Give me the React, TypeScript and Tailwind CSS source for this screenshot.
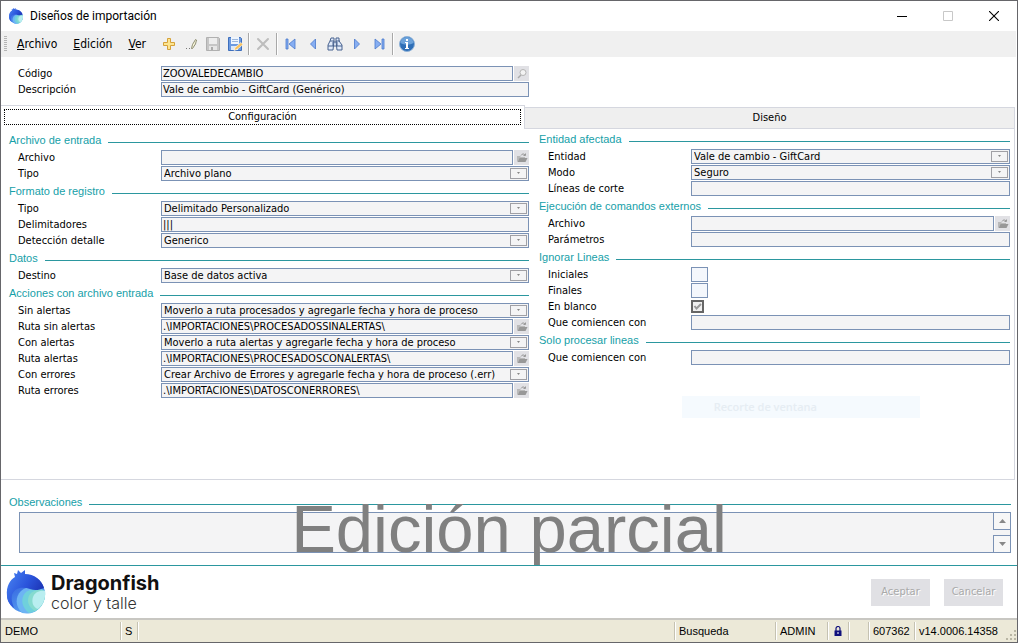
import type { ReactNode } from "react";

const FIELD = "block h-[15px] w-full min-w-0 rounded-none border border-[#7b92b5] bg-[#f4f4f5] p-0 text-[11px] leading-[13px] text-black outline-none";

function Section({ title, children }: { title: string; children?: ReactNode }) {
  return (
    <section>
      <div className="flex h-[19px] items-center gap-[7px]">
        <h2 className="font-['Liberation_Sans',sans-serif] text-[11px] leading-[15px] whitespace-nowrap text-[#16a0a8]">{title}</h2>
        <span className="mt-[3px] h-px flex-1 bg-[#2b979f]"></span>
      </div>
      {children}
    </section>
  );
}

function Row({ id, label, children }: { id: string; label: string; children: ReactNode }) {
  return (
    <div className="flex h-4 items-start">
      <label htmlFor={id} className="w-[152px] shrink-0 pl-[9px] leading-[16px] whitespace-nowrap">{label}</label>
      <div className="flex min-w-0 flex-1 items-start gap-px">{children}</div>
    </div>
  );
}

function TextRow({ id, label, value = "" }: { id: string; label: string; value?: string }) {
  return (
    <Row id={id} label={label}>
      <input id={id} type="text" readOnly defaultValue={value} className={FIELD + " pl-px"} />
    </Row>
  );
}

function FolderIcon() {
  return (
    <svg viewBox="0 0 12 12" className="h-3 w-3">
      <path d="M1 10V4h3l1 1h4v1H4L1 10z" fill="#b9b9b9" />
      <path d="M3.5 6H11.5L9.5 10H1.5z" fill="#989898" />
      <path d="M5 3.5C6 1.5 8 1.5 9 3M9.500 1.500V3.500H7.500" fill="none" stroke="#999" />
    </svg>
  );
}

function FileRow({ id, label, value = "" }: { id: string; label: string; value?: string }) {
  return (
    <Row id={id} label={label}>
      <input id={id} type="text" readOnly defaultValue={value} className={FIELD + " pl-px"} />
      <button type="button" aria-label="Buscar archivo" className="flex h-[15px] w-[15px] shrink-0 items-center justify-center bg-[#e1e1e5]">
        <FolderIcon />
      </button>
    </Row>
  );
}

function SelectRow({ id, label, value }: { id: string; label: string; value: string }) {
  return (
    <Row id={id} label={label}>
      <div className="relative w-full">
        <select id={id} className={FIELD + " appearance-none pl-[2px]"}>
          <option>{value}</option>
        </select>
        <span className="pointer-events-none absolute top-[2px] right-[2px] flex h-[11px] w-[17px] items-center justify-center border border-[#a0a0a5] bg-[#f4f4f5]">
          <svg viewBox="0 0 5 3" className="h-[3px] w-[5px]"><path d="M1 0h3L2.500 2z" fill="#888" /></svg>
        </span>
      </div>
    </Row>
  );
}

function SmallRow({ id, label }: { id: string; label: string }) {
  return (
    <Row id={id} label={label}>
      <input id={id} type="text" className="block h-[15px] w-[17px] border border-[#7b92b5] bg-[#f4f7fc] p-0" />
    </Row>
  );
}

function ToolButton({ label, children }: { label: string; children: ReactNode }) {
  return (
    <button type="button" aria-label={label} className="flex h-[22px] w-[22px] items-center justify-center">
      <svg viewBox="0 0 16 16" className="h-4 w-4">{children}</svg>
    </button>
  );
}

function ToolSeparator() {
  return <span className="mx-[2px] h-[22px] w-[2px] border-l border-[#a8a8a8] bg-white"></span>;
}

function Logo({ id, className }: { id: string; className: string }) {
  return (
    <svg viewBox="0 0 40 44" className={className}>
      <defs>
        <linearGradient id={id + "-dome"} x1="0" y1="0" x2="1" y2="0.6">
          <stop offset="0" stopColor="#4a86f2" />
          <stop offset="0.55" stopColor="#2b55dc" />
          <stop offset="1" stopColor="#1b2fae" />
        </linearGradient>
        <linearGradient id={id + "-tail"} x1="0" y1="0" x2="0.6" y2="1">
          <stop offset="0" stopColor="#2a52d8" />
          <stop offset="1" stopColor="#5aa4f4" />
        </linearGradient>
      </defs>
      <circle cx="20" cy="24" r="19" fill={"url(#" + id + "-tail)"} />
      <path d="M39 21C33 16 22 15 15 21c-6 6-6 15 1 22 14 3 24-8 23-22z" fill="#6db4f3" />
      <path d="M39 21C33 18 24 18 19 23c-5 6-3 15 4 20 11-1 17-11 16-22z" fill="#6fd0dc" />
      <path d="M39 21C33 19 28 20 24 24c-4 6-2 13 5 17 7-4 11-11 10-20z" fill="#86dbcf" />
      <path d="M39 21c-5-1-10 1-12 6-2 6 1 11 5 12 5-4 8-11 7-18z" fill="#b9eef0" />
      <path d="M1 26C0 16 4 10 9 7L8 3l3 1 1-4 3 3 4-3v4c9 0 17 6 19 14-5 2-9 3-14 1C16 16 8 18 6 25c-1 4 0 8 2 13C4 35 1 31 1 26z" fill={"url(#" + id + "-dome)"} />
    </svg>
  );
}

function StatusCell({ className, children }: { className: string; children?: ReactNode }) {
  return (
    <span className={"flex h-[18px] items-center border-r border-[#c5c2b2] pl-[4px] whitespace-nowrap shadow-[1px_0_0_#fff] " + className}>
      {children}
    </span>
  );
}

export default function App() {
  return (
    <div className="relative flex min-h-screen flex-col border border-[#66666a] bg-white font-['DejaVu_Sans_Condensed','DejaVu_Sans',sans-serif] text-[11px] text-black">
      {/* Title bar */}
      <header className="flex h-[30px] items-center pl-[7px]">
        <Logo id="logo-small" className="h-4 w-4" />
        <h1 className="ml-[6px] font-['Roboto',sans-serif] text-[12px]">Diseños de importación</h1>
        <div className="ml-auto flex">
          <button type="button" aria-label="Minimizar" className="flex h-7 w-[46px] items-center justify-center">
            <svg viewBox="0 0 10 10" className="h-[10px] w-[10px]"><path d="M0 5.500H10" stroke="#000" /></svg>
          </button>
          <button type="button" aria-label="Maximizar" disabled className="flex h-7 w-[46px] items-center justify-center">
            <svg viewBox="0 0 10 10" className="h-[10px] w-[10px]"><path d="M.5.5h9v9h-9z" fill="none" stroke="#c8c8c8" /></svg>
          </button>
          <button type="button" aria-label="Cerrar" className="flex h-7 w-[46px] items-center justify-center">
            <svg viewBox="0 0 10 10" className="h-[10px] w-[10px]"><path d="M0 0L10 10M10 0L0 10" stroke="#000" strokeWidth="1.100" /></svg>
          </button>
        </div>
      </header>

      {/* Menu and toolbar */}
      <div className="mr-px flex h-[26px] items-center bg-[#f0f0f0] pl-[3px]">
        <svg viewBox="0 0 3 16" className="h-4 w-[3px]"><path d="M1.500 0V16" stroke="#b5b5b5" strokeWidth="3" strokeDasharray="1 1" /></svg>
        <nav className="ml-[2px] flex text-[12px]">
          <button type="button" className="px-2"><u>A</u>rchivo</button>
          <button type="button" className="px-2"><u>E</u>dición</button>
          <button type="button" className="px-2"><u>V</u>er</button>
        </nav>
        <div className="ml-[4px] flex items-center">
          <ToolButton label="Nuevo">
            <path d="M6.500 2.500h3v4h4v3h-4v4h-3v-4h-4v-3h4z" fill="#fde58f" stroke="#d5a139" />
          </ToolButton>
          <ToolButton label="Editar">
            <path d="M3 12.500h1M6 12.500h1" stroke="#777" />
            <path d="M8.500 12.500l1-4 3-5 1 .5-1 4-3 4.500z" fill="#f5f3d8" stroke="#77775a" strokeWidth=".8" />
          </ToolButton>
          <ToolButton label="Guardar">
            <path d="M1.500 1.500h12l1 1v12h-13z" fill="#c6c6c6" stroke="#b0b0b0" />
            <path d="M4 2h8v6H4z" fill="#ededed" />
            <path d="M4 10h8v4H4z" fill="#e6e6e6" />
            <path d="M6 11h2v3H6z" fill="#aaa" />
          </ToolButton>
          <ToolButton label="Guardar como">
            <path d="M1.500 1.500h12l1 1v12h-13z" fill="#6c9ae0" stroke="#3e6fbd" />
            <path d="M4 1h8v7H4z" fill="#eef5fe" />
            <path d="M5 3.500h6M5 5.500h6" stroke="#9db8de" />
            <path d="M4 10h7v4H4z" fill="#dbe8f9" />
            <path d="M7 14.500l1-3 6-5 2 2-6 5z" fill="#fac35d" stroke="#fff" strokeWidth=".6" />
          </ToolButton>
          <ToolSeparator />
          <ToolButton label="Eliminar">
            <path d="M3 3L13 13M13 3L3 13" stroke="#bdbdbd" strokeWidth="2" strokeLinecap="round" />
          </ToolButton>
          <ToolSeparator />
          <ToolButton label="Primero">
            <path d="M3 3h2v10H3zM12 3v10L6 8z" fill="#86aef2" stroke="#4a78cc" strokeWidth=".8" />
          </ToolButton>
          <ToolButton label="Anterior">
            <path d="M10.500 3v10L5.500 8z" fill="#86aef2" stroke="#4a78cc" strokeWidth=".8" />
          </ToolButton>
          <ToolButton label="Buscar">
            <path d="M4 2h3v3l-1 9H1V9l2-4zM9 2h3v3l3 4v5h-5L9 5zM6 6h4v4H6z" fill="#e0eafa" stroke="#48628f" />
            <path d="M1 10h5M10 10h5M3 5h4M9 5h4" stroke="#48628f" />
          </ToolButton>
          <ToolButton label="Siguiente">
            <path d="M5.500 3v10l5-5z" fill="#86aef2" stroke="#4a78cc" strokeWidth=".8" />
          </ToolButton>
          <ToolButton label="Último">
            <path d="M11 3h2v10h-2zM4 3v10l6-5z" fill="#86aef2" stroke="#4a78cc" strokeWidth=".8" />
          </ToolButton>
          <ToolSeparator />
          <ToolButton label="Información">
            <circle cx="8" cy="8" r="7.500" fill="#2f6fb7" stroke="#8fb2d8" />
            <path d="M1.500 7a6.500 6 0 0 1 13 0c-4 2-9 2-13 0z" fill="#6ca2da" />
            <path d="M7 3h2v2H7zM6 6h3v6h1v1H6v-1h1V7H6z" fill="#fff" />
          </ToolButton>
        </div>
      </div>

      {/* Record header */}
      <div className="w-[52%] pt-[9px] pb-[7px] pl-[8px]">
        <Row id="codigo" label="Código">
          <input id="codigo" type="text" readOnly defaultValue="ZOOVALEDECAMBIO" className={FIELD + " pl-px"} />
          <button type="button" aria-label="Buscar código" className="flex h-[15px] w-[15px] shrink-0 items-center justify-center bg-[#e1e1e5]">
            <svg viewBox="0 0 12 12" className="h-3 w-3">
              <circle cx="7" cy="4.500" r="3" fill="#f3f3f3" stroke="#b5b5b5" />
              <path d="M5 7L2 10" stroke="#aaa" strokeWidth="1.500" />
            </svg>
          </button>
        </Row>
        <TextRow id="descripcion" label="Descripción" value="Vale de cambio - GiftCard (Genérico)" />
      </div>

      {/* Tabs */}
      <div role="tablist" className="mr-[2px] grid h-6 grid-cols-[524fr_490fr] items-end">
        <button type="button" role="tab" aria-selected="true" className="h-6 border-t border-r border-[#d5d7df] px-[3px] pt-[3px] pb-[4px]">
          <span className="flex h-4 items-center justify-center border border-dotted border-black">Configuración</span>
        </button>
        <button type="button" role="tab" aria-selected="false" className="h-[22px] border border-l-0 border-[#d5d7df] bg-[#efefef] pt-px">Diseño</button>
      </div>

      <main role="tabpanel" className="mr-[2px] grid flex-1 grid-cols-[520fr_471fr] content-start gap-x-[10px] border-r border-b border-[#d5d7df] pt-px pr-[4px] pb-[80px] pl-[8px]">
        <div className="pt-px">
          <Section title="Archivo de entrada">
            <FileRow id="archivo-entrada" label="Archivo" />
            <SelectRow id="tipo-archivo" label="Tipo" value="Archivo plano" />
          </Section>
          <Section title="Formato de registro">
            <SelectRow id="tipo-registro" label="Tipo" value="Delimitado Personalizado" />
            <TextRow id="delimitadores" label="Delimitadores" value="|||" />
            <SelectRow id="deteccion" label="Detección detalle" value="Generico" />
          </Section>
          <Section title="Datos">
            <SelectRow id="destino" label="Destino" value="Base de datos activa" />
          </Section>
          <Section title="Acciones con archivo entrada">
            <SelectRow id="sin-alertas" label="Sin alertas" value="Moverlo a ruta procesados y agregarle fecha y hora de proceso" />
            <FileRow id="ruta-sin-alertas" label="Ruta sin alertas" value=".\IMPORTACIONES\PROCESADOSSINALERTAS\" />
            <SelectRow id="con-alertas" label="Con alertas" value="Moverlo a ruta alertas y agregarle fecha y hora de proceso" />
            <FileRow id="ruta-alertas" label="Ruta alertas" value=".\IMPORTACIONES\PROCESADOSCONALERTAS\" />
            <SelectRow id="con-errores" label="Con errores" value="Crear Archivo de Errores y agregarle fecha y hora de proceso (.err)" />
            <FileRow id="ruta-errores" label="Ruta errores" value=".\IMPORTACIONES\DATOSCONERRORES\" />
          </Section>
        </div>
        <div>
          <Section title="Entidad afectada">
            <SelectRow id="entidad" label="Entidad" value="Vale de cambio - GiftCard" />
            <SelectRow id="modo" label="Modo" value="Seguro" />
            <TextRow id="lineas-corte" label="Líneas de corte" />
          </Section>
          <Section title="Ejecución de comandos externos">
            <FileRow id="archivo-comando" label="Archivo" />
            <TextRow id="parametros" label="Parámetros" />
          </Section>
          <Section title="Ignorar Lineas">
            <SmallRow id="iniciales" label="Iniciales" />
            <SmallRow id="finales" label="Finales" />
            <Row id="en-blanco" label="En blanco">
              <span className="relative mt-px flex">
                <input id="en-blanco" type="checkbox" defaultChecked className="h-[13px] w-[13px] appearance-none border-2 border-[#666] bg-[#f0f0f0]" />
                <svg viewBox="0 0 13 13" className="pointer-events-none absolute inset-0 h-[13px] w-[13px]"><path d="M3.500 6l2 2.500L10 4" fill="none" stroke="#999" strokeWidth="2" /></svg>
              </span>
            </Row>
            <TextRow id="ignorar-comiencen" label="Que comiencen con" />
          </Section>
          <Section title="Solo procesar lineas">
            <TextRow id="procesar-comiencen" label="Que comiencen con" />
          </Section>
        </div>
      </main>

      {/* Fading menu entry left over the form */}
      <div className="pointer-events-none absolute top-[395px] left-[67%] flex h-[22px] w-[238px] items-center bg-[#f5fafe] pl-8 font-['Open_Sans',sans-serif] text-[11px] font-semibold text-[#e6edf3]">
        Recorte de ventana
      </div>

      {/* Notes */}
      <div className="relative pt-[13px] pr-[6px] pb-3 pl-[8px]">
        <Section title="Observaciones">
          <div className="relative ml-[10px]">
            <textarea aria-label="Observaciones" readOnly className="block h-[41px] w-full resize-none overflow-hidden border border-[#7b92b5] bg-[#f4f4f5]"></textarea>
            <div className="absolute inset-y-0 right-0 flex flex-col justify-between">
              <button type="button" aria-label="Subir" className="flex h-[18px] w-[18px] items-center justify-center border border-[#7b92b5] bg-[#f7f7f7]">
                <svg viewBox="0 0 7 4" className="h-1 w-[7px]"><path d="M0 4h7L3.500 0z" fill="#888" /></svg>
              </button>
              <button type="button" aria-label="Bajar" className="flex h-[18px] w-[18px] items-center justify-center border border-[#7b92b5] bg-[#f7f7f7]">
                <svg viewBox="0 0 7 4" className="h-1 w-[7px]"><path d="M0 0h7L3.500 4z" fill="#888" /></svg>
              </button>
            </div>
          </div>
        </Section>
        {/* Edit state, clipped by the notes area */}
        <div className="pointer-events-none absolute inset-x-0 top-6 bottom-0 flex justify-center overflow-hidden font-['Liberation_Sans',sans-serif] text-[67px] leading-[50px] text-[#808080]">
          Edición parcial
        </div>
      </div>

      {/* Footer */}
      <footer className="flex h-[53px] items-center border-t border-[#2b979f] pr-[14px] pl-[5px]">
        <Logo id="logo" className="h-[44px] w-[40px]" />
        <div className="ml-[5px]">
          <p className="font-['Inter',sans-serif] text-[20px] leading-[22px] font-bold text-[#111]">Dragonfish</p>
          <p className="font-['Inter',sans-serif] text-[16px] leading-[18px] font-light text-[#333]">color y talle</p>
        </div>
        <div className="ml-auto flex gap-[14px]">
          <button type="button" disabled className="h-[27px] w-[59px] bg-[#e0e0e4] text-[#a9a9a9] text-shadow-[1px_1px_0_#fff]">Aceptar</button>
          <button type="button" disabled className="h-[27px] w-[59px] bg-[#e0e0e4] text-[#a9a9a9] text-shadow-[1px_1px_0_#fff]">Cancelar</button>
        </div>
      </footer>

      {/* Status bar */}
      <div className="flex h-6 items-center border-t-2 border-[#c8c7c2] bg-[#ece9d8] font-['Liberation_Sans',sans-serif] text-[11px]">
        <StatusCell className="w-[120px]">DEMO</StatusCell>
        <StatusCell className="w-[17px]">S</StatusCell>
        <StatusCell className="flex-1"></StatusCell>
        <StatusCell className="w-[101px]">Busqueda</StatusCell>
        <StatusCell className="w-[52px]">ADMIN</StatusCell>
        <StatusCell className="w-[21px]">
          <svg viewBox="0 0 8 10" className="ml-[2px] h-[10px] w-2">
            <path d="M2 5V2.500a2 2 0 0 1 4 0V5" fill="none" stroke="#10107c" strokeWidth="1.200" />
            <path d="M.5 4.500h7V10h-7z" fill="#10107c" />
            <path d="M3.500 6h1v2h-1z" fill="#fff" />
          </svg>
        </StatusCell>
        <StatusCell className="w-5"></StatusCell>
        <StatusCell className="w-[46px]">607362</StatusCell>
        <span className="flex w-[102px] items-center justify-between pl-[4px]">
          v14.0006.14358
          <svg viewBox="0 0 12 12" className="mt-[8px] h-3 w-3">
            <path d="M9 1h2v2H9zM9 5h2v2H9zM9 9h2v2H9zM5 5h2v2H5zM5 9h2v2H5zM1 9h2v2H1z" fill="#b9b6a4" />
          </svg>
        </span>
      </div>
    </div>
  );
}
